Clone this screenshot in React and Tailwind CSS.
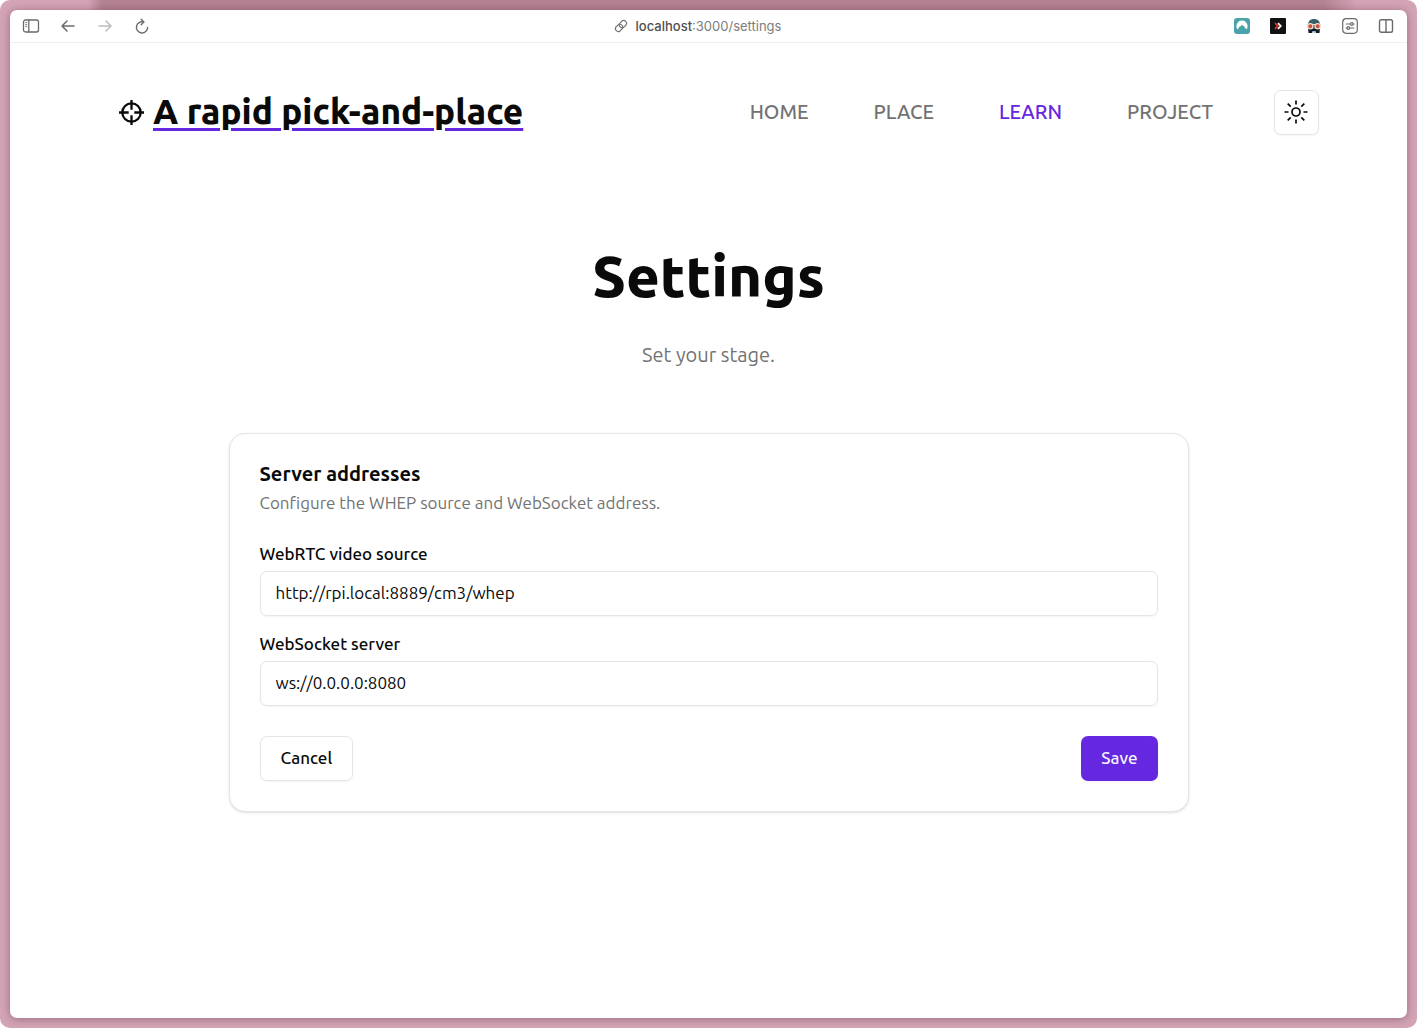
import React from "react";

const pageFont = "font-['Ubuntu','Noto_Sans',sans-serif]";

function ToolButton({ label, children }) {
  return (
    <button type="button" aria-label={label} className="flex size-5 items-center justify-center text-[#6b6b6b]">
      {children}
    </button>
  );
}

const stroke = { fill: "none", stroke: "currentColor", strokeLinecap: "round", strokeLinejoin: "round" };

function BrowserBar() {
  return (
    <div className="grid h-8 shrink-0 grid-cols-[1fr_auto_1fr] items-center border-b border-[#efefef] px-[11px] box-content">
      <div className="flex items-center gap-[17px]">
        <ToolButton label="Show sidebar">
          <svg width="18" height="14" viewBox="0 0 18 14" {...stroke} strokeWidth="1.3">
            <rect x="1.5" y="1" width="15" height="12" rx="2" />
            <path d="M6.8 1v12" />
            <path d="M3.6 3.6h1.2M3.6 5.6h1.2M3.6 7.6h1.2" strokeWidth="0.9" />
          </svg>
        </ToolButton>
        <ToolButton label="Back">
          <svg width="14" height="12" viewBox="0 0 14 12" {...stroke} strokeWidth="1.5">
            <path d="M13 6H1M6 1 1 6l5 5" />
          </svg>
        </ToolButton>
        <ToolButton label="Forward">
          <svg width="14" height="12" viewBox="0 0 14 12" {...stroke} stroke="#bdbdbd" strokeWidth="1.5">
            <path d="M1 6h12M8 1l5 5-5 5" />
          </svg>
        </ToolButton>
        <ToolButton label="Reload">
          <svg width="14" height="16" viewBox="0 0 14 16" {...stroke} strokeWidth="1.4">
            <path d="M8.6 4A5.6 5.6 0 1 0 12.6 9.4" />
            <path d="M6.2 1.2 8.8 4 6.2 6.8" />
          </svg>
        </ToolButton>
      </div>
      <div className="mr-[22px] flex items-center gap-2 text-[13px] leading-5 text-[#7d7d7d] font-['Inter',sans-serif]">
        <svg width="14" height="14" viewBox="0 0 24 24" fill="none" stroke="#6f6f6f" strokeWidth="2" strokeLinecap="round" strokeLinejoin="round">
          <path d="M10 13a5 5 0 0 0 7.5.5l3-3a5 5 0 0 0-7-7l-3 3a5 5 0 0 0 0 7" />
          <path d="M14 11a5 5 0 0 0-7.5-.5l-3 3a5 5 0 0 0 7 7l3-3a5 5 0 0 0 0-7" />
        </svg>
        <span>
          <span className="font-medium text-[#505050]">localhost</span>:3000/settings
        </span>
      </div>
      <div className="flex items-center justify-end gap-4">
        <ToolButton label="VPN">
          <svg width="16" height="16" viewBox="0 0 16 16">
            <rect width="16" height="16" rx="3" fill="#4aa3a8" />
            <path d="M3.6 11.6A5.6 5.6 0 1 1 12.4 11.6L9.4 7.4 8.9 8 8 6.6 6.6 8.6 6 8z" fill="#fff" />
          </svg>
        </ToolButton>
        <ToolButton label="Developer extension">
          <svg width="16" height="16" viewBox="0 0 16 16" fill="none">
            <rect width="16" height="16" rx="1" fill="#121212" />
            <path d="M5 5.2 7.8 8 5 10.8" stroke="#e5342f" strokeWidth="1.7" />
            <path d="M8 5.2 10.8 8 8 10.8" stroke="#fff" strokeWidth="1.7" />
          </svg>
        </ToolButton>
        <ToolButton label="Privacy extension">
          <svg width="16" height="16" viewBox="0 0 16 16">
            <path d="M2 7C2 3 4.5 1 8 1s6 2 6 6z" fill="#35606c" />
            <path d="M2 9.5h12L13.5 15h-11z" fill="#0f1a28" />
            <path d="M5 6h6l-1 5H6z" fill="#35606c" />
            <path d="M6 15v-1.500l2-.6 2 .6V15z" fill="#b9cdd6" />
            <path d="M.8 6.500h14.400" stroke="#f5d9cb" strokeWidth="1" />
            <circle cx="4.300" cy="8.200" r="2.600" fill="#c9553d" stroke="#f5d9cb" strokeWidth="1.200" />
            <circle cx="11.700" cy="8.200" r="2.600" fill="#c9553d" stroke="#f5d9cb" strokeWidth="1.200" />
          </svg>
        </ToolButton>
        <ToolButton label="Page settings">
          <svg width="16" height="16" viewBox="0 0 16 16" {...stroke} strokeWidth="1.2">
            <rect x="0.7" y="0.7" width="14.6" height="14.6" rx="3.5" />
            <path d="M4.2 6h4M11.5 6h.5M4.2 10h.5M8 10h4" />
            <circle cx="9.8" cy="6" r="1.3" />
            <circle cx="6.3" cy="10" r="1.3" />
          </svg>
        </ToolButton>
        <ToolButton label="Split view">
          <svg width="16" height="16" viewBox="0 0 16 16" {...stroke} strokeWidth="1.4">
            <rect x="1.5" y="1.7" width="13" height="12.6" rx="1.8" />
            <path d="M8 1.7v12.6" />
          </svg>
        </ToolButton>
      </div>
    </div>
  );
}

const navItems = [
  { label: "HOME" },
  { label: "PLACE" },
  { label: "LEARN", active: true },
  { label: "PROJECT" },
];

function SiteHeader() {
  return (
    <header className="flex items-center justify-between pl-[21px]">
      <a href="#" className="flex items-center gap-[9px] text-[#0a0a0a]">
        <svg width="25" height="25" viewBox="0 0 25 25" fill="none" stroke="currentColor" strokeWidth="2.3">
          <circle cx="12.5" cy="12.5" r="9.2" />
          <path d="M12.5 0v9.7M12.5 15.3V25M0 12.5h9.7M15.3 12.5H25" />
        </svg>
        <span className="pb-[3px] text-[35px] leading-[42px] font-extrabold underline decoration-[#6527df] decoration-[3px] underline-offset-[4px]">
          A rapid pick-and-place
        </span>
      </a>
      <div className="flex items-center gap-[61px]">
        <nav className="flex items-center gap-[65px] pb-0.5 text-[20px] leading-7 font-medium">
          {navItems.map((item) => (
            <a key={item.label} href="#" className={item.active ? "text-[#6527df]" : "text-[#737373]"}>
              {item.label}
            </a>
          ))}
        </nav>
        <button
          type="button"
          aria-label="Toggle theme"
          className="flex size-[45px] items-center justify-center rounded-[7px] border border-[#e5e5e5] pr-px pb-px text-[#0a0a0a] shadow-xs"
        >
          <svg width="24" height="24" viewBox="0 0 24 24" fill="none" stroke="currentColor" strokeWidth="1.7">
            <circle cx="12" cy="12" r="4" />
            <path d="M12 .5v4M12 19.5v4M.5 12h4M19.5 12h4M3.7 3.7l3 3M17.3 17.3l3 3M3.7 20.3l3-3M17.3 6.7l3-3" />
          </svg>
        </button>
      </div>
    </header>
  );
}

function Field({ id, label, value }) {
  return (
    <div className="flex flex-col gap-[5px]">
      <label htmlFor={id} className="self-start text-[17px] leading-[25px] font-medium">
        {label}
      </label>
      <input
        id={id}
        type="text"
        defaultValue={value}
        className="h-[45px] w-full rounded-[7px] border border-[#e5e5e5] px-[15px] pb-0.5 text-[17px] shadow-xs outline-none"
      />
    </div>
  );
}

function SettingsCard() {
  return (
    <form
      onSubmit={(event) => event.preventDefault()}
      className="mx-auto w-full max-w-[960px] rounded-[16px] border border-[#e5e5e5] bg-white p-[30px] text-[#0a0a0a] shadow-sm"
    >
      <h2 className="text-[20px] leading-5 font-semibold">Server addresses</h2>
      <p className="mt-[5px] text-[17px] leading-[27px] text-[#737373]">
        Configure the WHEP source and WebSocket address.
      </p>
      <div className="mt-[25px] flex flex-col gap-[15px]">
        <Field id="video-source" label="WebRTC video source" value="http://rpi.local:8889/cm3/whep" />
        <Field id="socket-server" label="WebSocket server" value="ws://0.0.0.0:8080" />
      </div>
      <div className="mt-[30px] flex items-center justify-between text-[17px] font-medium">
        <button type="button" className="h-[45px] rounded-[7px] border border-[#e5e5e5] px-5 pb-0.5 shadow-xs">
          Cancel
        </button>
        <button type="submit" className="h-[45px] rounded-[7px] bg-[#6527df] px-5 pb-0.5 text-[#f5f3ff] shadow-xs">
          Save
        </button>
      </div>
    </form>
  );
}

export default function App() {
  return (
    <div className="min-h-screen bg-white">
      <div className="flex min-h-screen flex-col rounded-[10px] bg-[linear-gradient(90deg,#d3a4b6_0,#d3a4b6_88px,#b38293_102px,#b38293_calc(100%_-_94px),#d3a4b6_calc(100%_-_60px))] bg-[#d3a4b6] bg-[length:100%_20px] bg-no-repeat p-[10px]">
        <div className="flex grow flex-col rounded-[7px] bg-white shadow-[0_1px_8px_rgba(70,20,40,0.4)]">
          <BrowserBar />
          <main className={"px-[88px] pt-[47px] pb-16 " + pageFont}>
            <SiteHeader />
            <section className="mt-[103px] mb-16 text-center">
              <h1 className="text-[58px] leading-[75px] font-extrabold text-[#0a0a0a]">Settings</h1>
              <p className="mt-[28px] text-[20px] leading-7 text-[#737373]">Set your stage.</p>
            </section>
            <SettingsCard />
          </main>
        </div>
      </div>
    </div>
  );
}
